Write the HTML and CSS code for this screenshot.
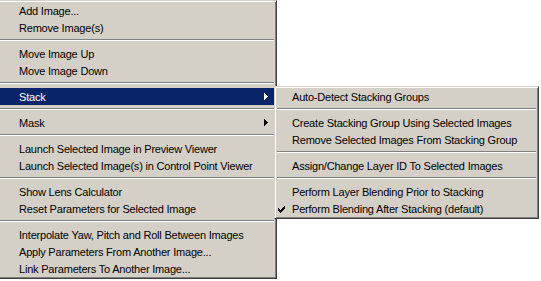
FILE: index.html
```html
<!DOCTYPE html>
<html lang="en">
<head>
	<meta charset="UTF-8">
	<title>Image menu</title>
	<link rel="stylesheet" href="styles.css">
</head>
<body>
	<ul class="menu main">
		<li class="item">Add Image...</li>
		<li class="item">Remove Image(s)</li>
		<li class="sep"></li>
		<li class="item">Move Image Up</li>
		<li class="item">Move Image Down</li>
		<li class="sep"></li>
		<li class="item active">Stack
			<svg class="arrow" width="4" height="7" viewBox="0 0 4 7"><path d="M0 0h1v7h-1z M1 1h1v5h-1z M2 2h1v3h-1z M3 3h1v1h-1z"/></svg>
		</li>
		<li class="sep"></li>
		<li class="item">Mask
			<svg class="arrow" width="4" height="7" viewBox="0 0 4 7"><path d="M0 0h1v7h-1z M1 1h1v5h-1z M2 2h1v3h-1z M3 3h1v1h-1z"/></svg>
		</li>
		<li class="sep"></li>
		<li class="item">Launch Selected Image in Preview Viewer</li>
		<li class="item">Launch Selected Image(s) in Control Point Viewer</li>
		<li class="sep"></li>
		<li class="item">Show Lens Calculator</li>
		<li class="item">Reset Parameters for Selected Image</li>
		<li class="sep"></li>
		<li class="item">Interpolate Yaw, Pitch and Roll Between Images</li>
		<li class="item">Apply Parameters From Another Image...</li>
		<li class="item">Link Parameters To Another Image...</li>
	</ul>

	<ul class="menu sub">
		<li class="item">Auto-Detect Stacking Groups</li>
		<li class="sep"></li>
		<li class="item">Create Stacking Group Using Selected Images</li>
		<li class="item">Remove Selected Images From Stacking Group</li>
		<li class="sep"></li>
		<li class="item">Assign/Change Layer ID To Selected Images</li>
		<li class="sep"></li>
		<li class="item">Perform Layer Blending Prior to Stacking</li>
		<li class="item">
			<svg class="check" width="7" height="7" viewBox="0 0 7 7"><path d="M6 0h1v1h-1z M5 1h2v1h-2z M0 2h1v1h-1z M4 2h3v1h-3z M0 3h2v1h-2z M3 3h3v1h-3z M0 4h5v1h-5z M1 5h3v1h-3z M2 6h1v1h-1z"/></svg>
			Perform Blending After Stacking (default)
		</li>
	</ul>
</body>
</html>
```

FILE: styles.css
```css
*{
	margin: 0;
	padding: 0;
}
body{
	background: #fff;
	font: 11px "Liberation Sans", Arial, sans-serif;
	letter-spacing: -0.2px;
	color: #000;
	overflow: hidden;
}
.menu{
	position: absolute;
	list-style: none;
	display: flex;
	flex-direction: column;
	background: #d4d0c8;
	border: 1px solid;
	border-color: #d4d0c8 #404040 #404040 #d4d0c8;
	box-shadow: inset 1px 1px #fff, inset -1px -1px #808080;
	padding: 1px;
}
.main{
	left: -3px;
	top: 0;
	width: 276px;
}
.sub{
	left: 274px;
	top: 86px;
	width: 261px;
}
.item{
	position: relative;
	height: 15px;
	line-height: 15px;
	padding: 2px 0 0 20px;
	white-space: nowrap;
}
.sub .item{
	padding-left: 16px;
}
.active{
	background: #0a246a;
	color: #fff;
}
.sep{
	height: 2px;
	padding: 3px 0 4px;
	background: linear-gradient(#808080, #808080) 1px 3px / calc(100% - 2px) 1px no-repeat,
		linear-gradient(#fff, #fff) 1px 4px / calc(100% - 2px) 1px no-repeat;
}
.arrow{
	position: absolute;
	right: 7px;
	top: 5px;
	fill: #000;
}
.active .arrow{
	fill: #fff;
}
.check{
	position: absolute;
	left: 2px;
	top: 6px;
	fill: #000;
}
```
